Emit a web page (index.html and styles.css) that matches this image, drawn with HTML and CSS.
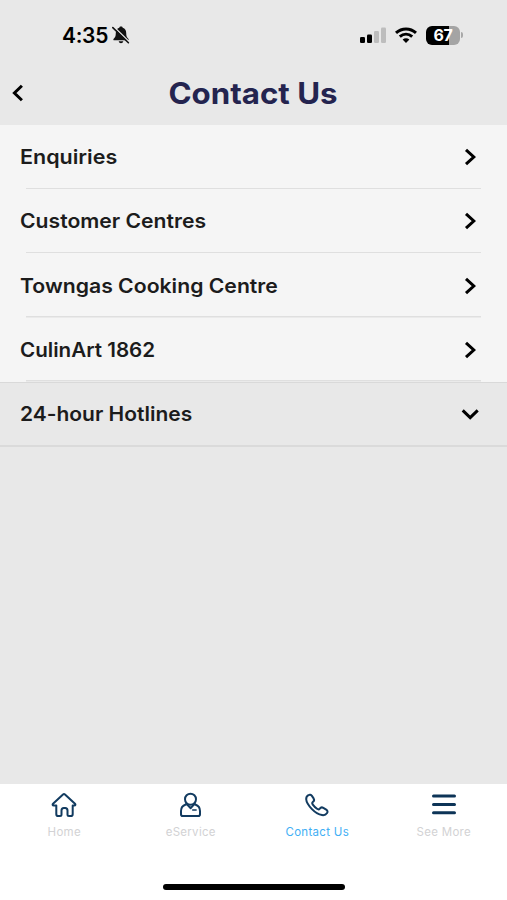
FILE: index.html
```html
<!DOCTYPE html>
<html lang="en">
<head>
<meta charset="utf-8">
<meta name="viewport" content="width=device-width, initial-scale=1">
<title>Contact Us</title>
<link rel="stylesheet" href="styles.css">
</head>
<body>
<div class="app">
  <div class="status">
    <div class="clock">
      <span class="time">4:35</span>
      <svg class="bell" width="20" height="20" viewBox="0 0 20 20">
        <path d="M10 1.5C8.9 1.5 8.4 2.1 8.3 2.7C5.8 3.4 4.8 5.4 4.8 8C4.8 11.5 4 12.4 2.7 13.8C2 14.6 2.3 15.3 3.2 15.3H16.8C17.7 15.3 18 14.6 17.3 13.8C16 12.4 15.2 11.5 15.2 8C15.2 5.4 14.2 3.4 11.7 2.7C11.6 2.1 11.1 1.5 10 1.5ZM7.7 16.3C8 18.9 12 18.9 12.3 16.3Z"/>
        <path class="bell-gap" d="M2.8 1.8L18.5 17"/>
        <path class="bell-slash" d="M1.8 2.6L17.4 17.7"/>
      </svg>
    </div>
    <div class="indicators">
      <svg class="signal" width="26" height="17" viewBox="0 0 26 17">
        <rect x="0" y="10" width="5" height="6" rx="1.3"/>
        <rect x="7" y="7.4" width="5" height="8.6" rx="1.3"/>
        <rect class="off" x="14" y="4" width="5" height="12" rx="1.3"/>
        <rect class="off" x="21" y="0.5" width="5" height="15.5" rx="1.3"/>
      </svg>
      <svg class="wifi" width="24" height="17" viewBox="0 0 24 17">
        <path d="M2 5.8C7.8 .6 16.2 .6 22 5.8"/>
        <path d="M5.8 9.6C9.5 6.4 14.5 6.4 18.2 9.6"/>
        <path class="dot" d="M8.6 12.6C10.6 10.9 13.4 10.9 15.4 12.6L12 16.1Z"/>
      </svg>
      <div class="battery"><span class="level">67</span><i class="cap"></i></div>
    </div>
  </div>
  <header class="header">
    <svg class="back" width="14" height="20" viewBox="0 0 14 20"><path d="M10.9 2.7L3.4 10L10.9 17.3"/></svg>
    <h1 class="title">Contact Us</h1>
  </header>
  <main class="list">
    <div class="row"><span class="label enquiries">Enquiries</span><svg class="chev" width="20" height="20" viewBox="0 0 20 20"><path d="M6 2.8L13.8 10L6 17.2"/></svg></div>
    <div class="row"><span class="label customer">Customer Centres</span><svg class="chev" width="20" height="20" viewBox="0 0 20 20"><path d="M6 2.8L13.8 10L6 17.2"/></svg></div>
    <div class="row"><span class="label cooking">Towngas Cooking Centre</span><svg class="chev" width="20" height="20" viewBox="0 0 20 20"><path d="M6 2.8L13.8 10L6 17.2"/></svg></div>
    <div class="row"><span class="label culinart">CulinArt 1862</span><svg class="chev" width="20" height="20" viewBox="0 0 20 20"><path d="M6 2.8L13.8 10L6 17.2"/></svg></div>
    <div class="row group"><span class="label hotlines">24-hour Hotlines</span><svg class="chev" width="20" height="20" viewBox="0 0 20 20"><path d="M2.7 6.4L10.2 13.6L17.7 6.4"/></svg></div>
  </main>
  <nav class="tabs">
    <div class="tab">
      <svg width="26" height="26" viewBox="0 0 26 26"><path d="M5.3 13.4H2.7C1.5 13.4 1.3 12.5 2 11.8L12 2.4C12.7 1.8 13.3 1.8 14 2.4L24 11.8C24.7 12.5 24.5 13.4 23.3 13.4H21.7V22.2C21.7 23.5 21 24 19.9 24H18C17 24 16.5 23.5 16.5 22.5V18.6C16.5 17 15.6 16.1 14.2 16.1H12.8C11.4 16.1 10.5 17 10.5 18.6V22.5C10.5 23.5 10 24 9 24H7.1C6 24 5.3 23.5 5.3 22.2Z"/></svg>
      <span>Home</span>
    </div>
    <div class="tab">
      <svg width="26" height="26" viewBox="0 0 26 26"><circle cx="12.5" cy="7.2" r="5.5"/><path d="M7.7 12.5C4.1 13.8 3 16 3 19V22.2C3 23.5 3.6 24 4.7 24H20.3C21.4 24 22 23.5 22 22.2V19C22 16 20.9 13.8 17.3 12.5M8.2 11.5L12.7 16.2L16.8 11.5"/><path class="badge" d="M14.7 18.1H18.1"/></svg>
      <span>eService</span>
    </div>
    <div class="tab active">
      <svg width="26" height="26" viewBox="0 0 26 26"><path d="M4.4 3.2C5.7 2.3 7 2.6 7.9 3.9L9.6 6.4C10.4 7.7 10.2 8.9 9 9.8C8 10.6 8 11.5 8.8 12.6C10 14.2 11.4 15.6 13 16.8C14.1 17.6 15 17.6 15.8 16.6C16.7 15.4 18 15.1 19.3 15.9L22.2 17.7C23.6 18.6 23.9 19.8 23.1 21C21.9 22.8 20.2 23.5 18 23.1C14.8 22.6 10.8 20.1 7.7 16.9C4.9 13.9 2.4 10.5 2.2 7.3C2.1 5.4 2.9 4.1 4.4 3.2Z"/></svg>
      <span>Contact Us</span>
    </div>
    <div class="tab">
      <svg class="menu" width="26" height="26" viewBox="0 0 26 26"><path d="M2.5 4.1H23.5M2.5 12.5H23.5M2.5 20.8H23.5"/></svg>
      <span>See More</span>
    </div>
    <div class="home-bar"></div>
  </nav>
</div>
</body>
</html>
```
FILE: styles.css
```css
* { box-sizing: border-box; }
body { margin: 0; font-family: Inter, "Liberation Sans", sans-serif; background: #e8e8e8; }
.app { height: 900px; display: flex; flex-direction: column; overflow: hidden; }
.status { height: 70px; display: flex; justify-content: space-between; padding: 0 44px 0 62px; }
.clock, .indicators { display: flex; align-items: center; height: 70px; }
.time { font-size: 21px; font-weight: 600; line-height: 26px; padding-top: 2px; width: 49px; white-space: nowrap; letter-spacing: -.3px; }
.bell { fill: #111; }
.bell-gap { stroke: #e8e8e8; stroke-width: 1.4; }
.bell-slash { stroke: #111; stroke-width: 1.6; stroke-linecap: round; }
.signal .off { fill: #bdbdbd; }
.wifi { margin: 0 8px; fill: none; stroke: #000; stroke-width: 3; }
.wifi .dot { fill: #000; stroke: none; }
.battery { display: flex; align-items: center; gap: 1px; }
.level { width: 34px; height: 19px; border-radius: 6px; background: linear-gradient(90deg, #000 67%, #a4a4a4 67%); color: #fff; font-size: 16px; font-weight: 700; line-height: 19px; text-align: center; letter-spacing: -.4px; }
.cap { width: 2px; height: 6px; border-radius: 0 2px 2px 0; background: #a8a8a8; }
.header { height: 55px; display: grid; grid-template-columns: 14px 1fr 14px; align-items: center; padding: 0 12px 9px 11px; }
.back, .chev { fill: none; stroke: #000; stroke-width: 3; }
.title { margin: 0; color: #24244f; font-size: 29.5px; line-height: 36px; font-weight: 700; text-align: center; white-space: nowrap; transform: scaleX(1.06); }
.row { height: 64.2px; display: flex; align-items: center; justify-content: space-between; padding: .4px 27px 0 20px; background: linear-gradient(#dfdfdf, #dfdfdf) 26px 100% / calc(100% - 52px) 1.5px no-repeat #f5f5f5; }
.row.group { height: 65.2px; padding-top: 1px; border-top: 1px solid #d9d9d9; border-bottom: 2px solid #dadada; background: #e8e8e8; }
.label { color: #1c1c1c; font-size: 20px; line-height: 28px; font-weight: 600; white-space: nowrap; transform-origin: 0 50%; }
.enquiries { transform: scaleX(1.074); }
.customer { transform: scaleX(1.057); }
.cooking { transform: scaleX(1.06); }
.culinart { transform: scaleX(1.03); }
.hotlines { transform: scaleX(1.049); }
.tabs { margin-top: auto; height: 116px; padding-left: 1px; background: #fff; display: grid; grid-template-columns: repeat(4, 1fr); grid-template-rows: 100px 16px; }
.tab { display: flex; flex-direction: column; align-items: center; padding-top: 8px; color: #d2d2d4; font-size: 11.5px; line-height: 14px; letter-spacing: .3px; }
.tab svg { fill: none; stroke: #123b60; stroke-width: 2; stroke-linecap: round; stroke-linejoin: round; margin-bottom: 7px; }
.tab .badge { stroke-width: 1.5; }
.tab .menu { stroke: #0d3457; stroke-width: 3; }
.active { color: #42aff5; }
.home-bar { grid-column: 1 / -1; justify-self: center; width: 182px; height: 6px; border-radius: 3px; background: #000; }
```
